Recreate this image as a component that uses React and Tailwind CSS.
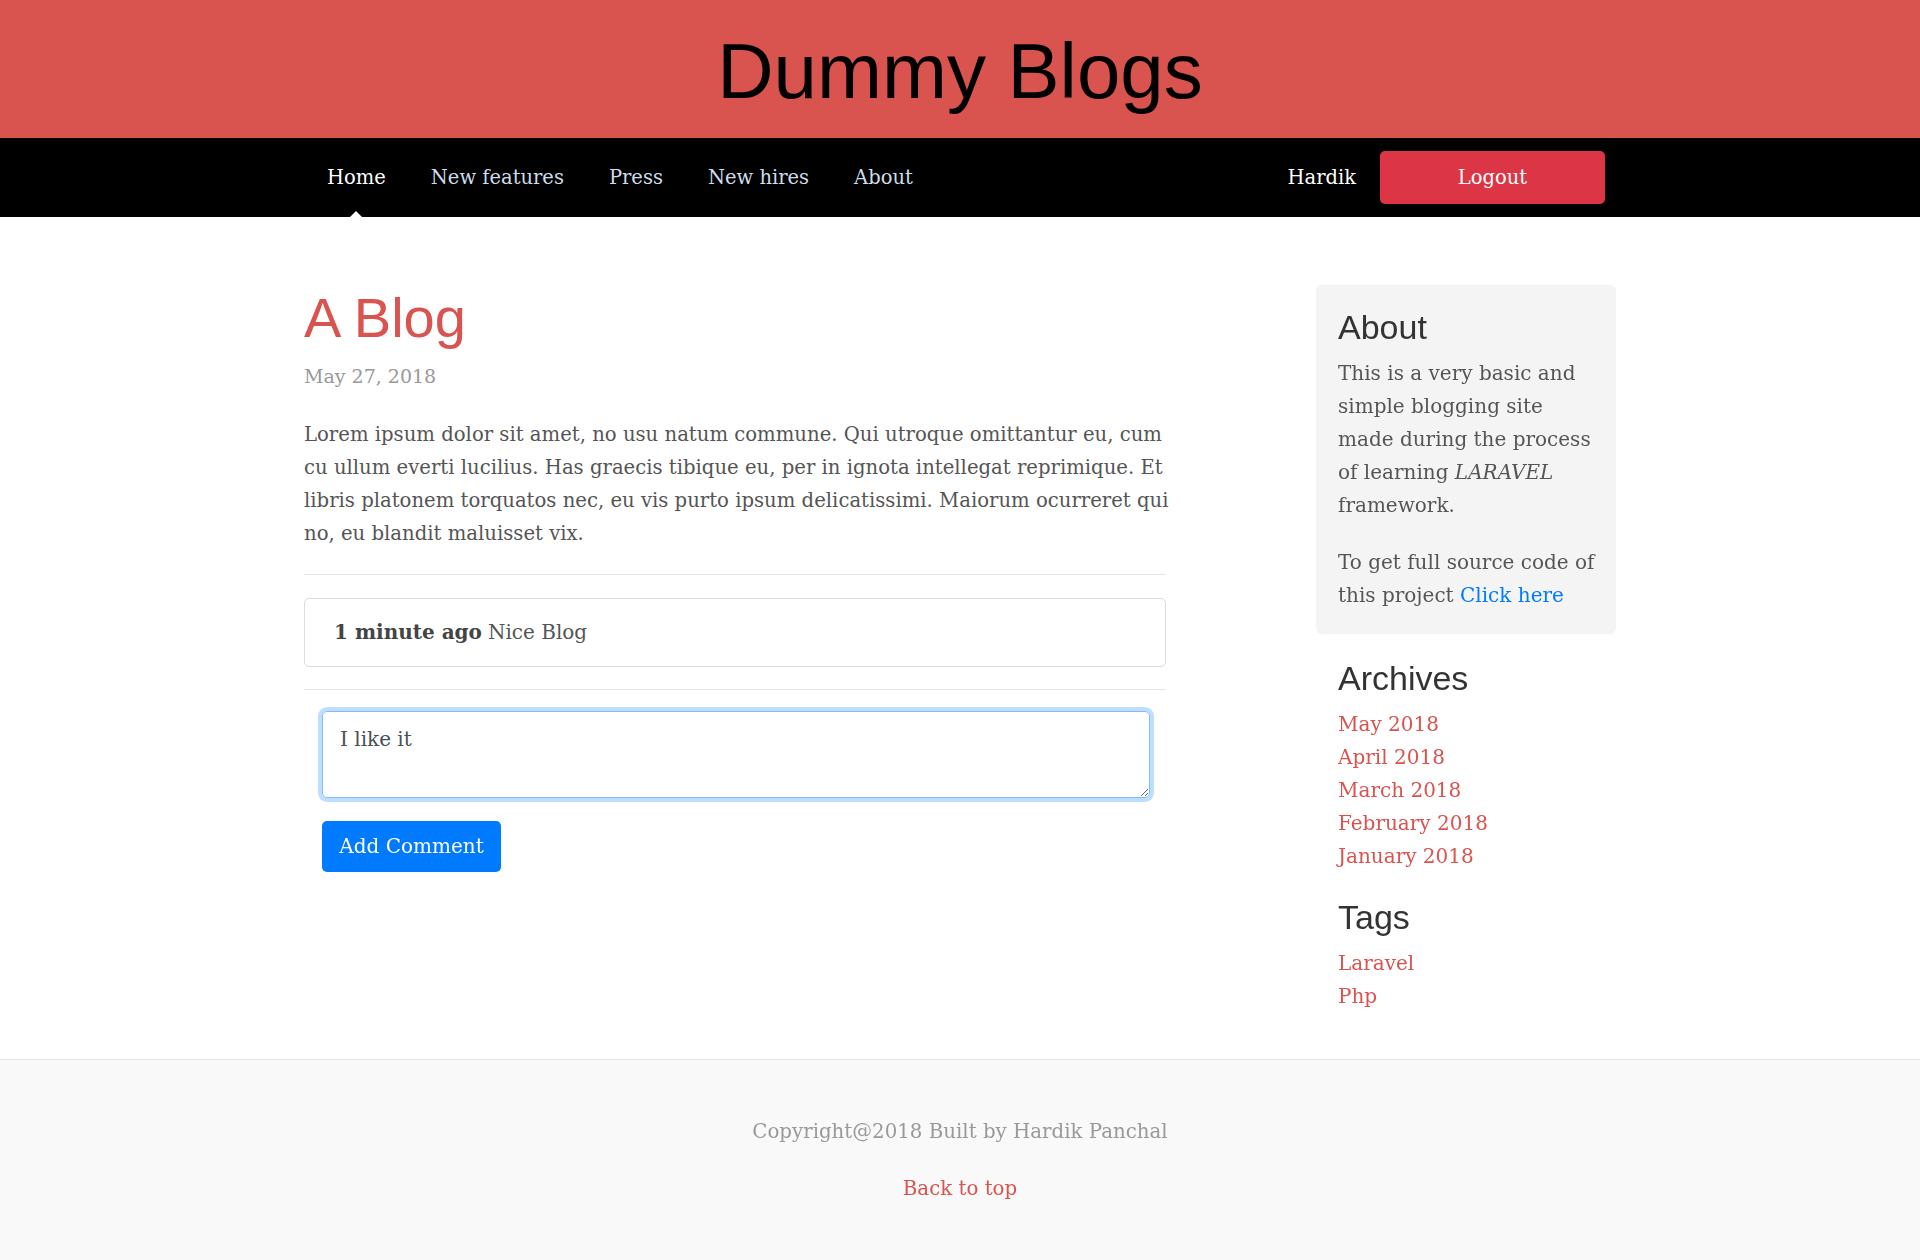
import React, { useEffect, useRef } from 'react';

const serif = "font-['DejaVu_Serif',serif]";
const sans = "font-['Liberation_Sans',Arial,sans-serif]";

const navItems = ['Home', 'New features', 'Press', 'New hires', 'About'];
const archives = ['May 2018', 'April 2018', 'March 2018', 'February 2018', 'January 2018'];
const tags = ['Laravel', 'Php'];

function Header() {
    return (
        <header className="h-[138px] bg-[#d9534f] flex items-center justify-center pt-1">
            <h1 className={`${sans} text-[78px] leading-none text-black`}>Dummy Blogs</h1>
        </header>
    );
}

function Nav() {
    return (
        <nav className="h-[79px] bg-black">
            <div className={`${serif} w-[1312px] mx-auto h-full flex items-center pl-[23px] pr-[11px] text-[19.5px]`}>
                <div className="flex items-center h-full gap-[45px]">
                    {navItems.map((item, idx) => (
                        <a key={item} href="#" className={`relative h-full flex items-center ${idx === 0 ? 'text-white' : 'text-[#cdddeb]'}`}>
                            {item}
                            {idx === 0 && (
                                <span className="absolute bottom-0 left-1/2 -translate-x-1/2 w-0 h-0 border-x-[6px] border-x-transparent border-b-[6px] border-b-white" />
                            )}
                        </a>
                    ))}
                </div>
                <div className="ml-auto flex items-center gap-[24px]">
                    <span className="text-white">Hardik</span>
                    <button className="w-[225px] h-[53px] rounded-[5px] bg-[#dc3545] text-white">Logout</button>
                </div>
            </div>
        </nav>
    );
}

function Post() {
    const boxRef = useRef(null);

    useEffect(() => {
        // caret sits after the typed text, like in the shot
        const el = boxRef.current;
        if (!el) return;
        el.focus();
        el.setSelectionRange(el.value.length, el.value.length);
    }, []);

    return (
        <div className="w-[862px]">
            <h2 className={`${sans} text-[56px] leading-[1.1] text-[#d9534f]`}>A Blog</h2>
            <p className="mt-[13px] text-[19px] leading-[28px] text-[#999]">May 27, 2018</p>
            <p className="mt-[28px] w-[885px] text-[19.65px] leading-[33px] text-[#555]">
                Lorem ipsum dolor sit amet, no usu natum commune. Qui utroque omittantur eu, cum cu ullum everti lucilius. Has graecis tibique eu, per in ignota intellegat reprimique. Et libris platonem torquatos nec, eu vis purto ipsum delicatissimi. Maiorum ocurreret qui no, eu blandit maluisset vix.
            </p>
            <hr className="mt-[24px] border-[#e5e5e5]" />
            <div className="mt-[23px] h-[69px] border border-[#dcdcdc] rounded-[5px] flex items-center px-[29px] text-[20px] text-[#555]">
                <span className="font-bold text-[#444]">1 minute ago</span>
                <span className="ml-[6px]">Nice Blog</span>
            </div>
            <hr className="mt-[22px] border-[#e5e5e5]" />
            <div className="pl-[18px] pr-[16px]">
                <textarea
                    ref={boxRef}
                    defaultValue="I like it"
                    className="mt-[21px] block w-full h-[87px] rounded-[5px] border border-[#80bdff] ring-4 ring-[#007bff]/25 px-[17px] pt-[12px] text-[20px] leading-[30px] text-[#495057] caret-[#495057] outline-none resize-y"
                />
                <button className="mt-[23px] w-[179px] h-[51px] rounded-[5px] bg-[#007bff] text-white text-[20px]">Add Comment</button>
            </div>
        </div>
    );
}

function Sidebar() {
    return (
        <aside className="w-[300px]">
            <div className="rounded-[6px] bg-[#f4f4f4] pl-[22px] pr-[10px] pt-[22px] pb-[22px]">
                <h4 className={`${sans} text-[34px] leading-[40px] text-[#333]`}>About</h4>
                <p className="mt-[10px] pr-[12px] text-[20px] leading-[33px] text-[#555]">
                    This is a very basic and simple blogging site made during the process of learning <em>LARAVEL</em> framework.
                </p>
                <p className="mt-[24px] text-[20px] leading-[33px] text-[#555]">
                    To get full source code of this project <a href="#" className="text-[#007bff]">Click here</a>
                </p>
            </div>
            <div className="px-[22px]">
                <h4 className={`${sans} mt-[24px] text-[34px] leading-[40px] text-[#333]`}>Archives</h4>
                <ol className="mt-[10px] text-[20px] leading-[33px]">
                    {archives.map(a => (
                        <li key={a}><a href="#" className="text-[#d9534f]">{a}</a></li>
                    ))}
                </ol>
                <h4 className={`${sans} mt-[24px] text-[34px] leading-[40px] text-[#333]`}>Tags</h4>
                <ol className="mt-[10px] text-[20px] leading-[33px]">
                    {tags.map(t => (
                        <li key={t}><a href="#" className="text-[#d9534f]">{t}</a></li>
                    ))}
                </ol>
            </div>
        </aside>
    );
}

export default function App() {
    return (
        <div className={`${serif} min-h-screen bg-white`}>
            <Header />
            <Nav />
            <main className="w-[1312px] mx-auto pt-[68px] pb-[46px] flex items-start justify-between">
                <div className="pt-[2px]"><Post /></div>
                <Sidebar />
            </main>
            <footer className="border-t border-[#e5e5e5] bg-[#f9f9f9] pt-[55px] pb-[80px] text-center text-[19.8px] leading-[33px]">
                <p className="text-[#999]">Copyright@2018 Built by Hardik Panchal</p>
                <p className="mt-[24px]"><a href="#" className="text-[#d9534f]">Back to top</a></p>
            </footer>
        </div>
    );
}
